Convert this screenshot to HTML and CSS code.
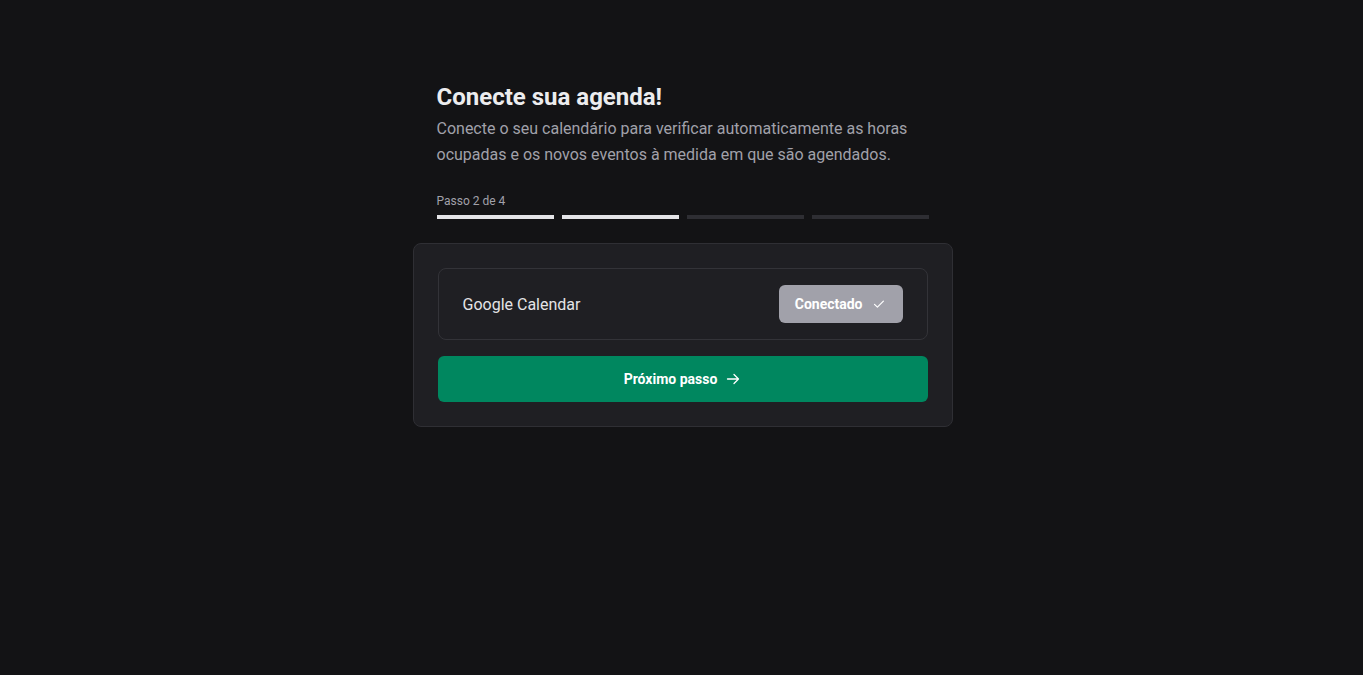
FILE: index.html
```html
<!DOCTYPE html>
<html lang="pt">
<head>
<meta charset="utf-8">
<title>Conecte sua agenda</title>
<link rel="stylesheet" href="styles.css">
</head>
<body>
<main class="page">
  <div class="wrap">
    <header class="head">
      <h1 class="title">Conecte sua agenda!</h1>
      <p class="subtitle">Conecte o seu calendário para verificar automaticamente as horas ocupadas e os novos eventos à medida em que são agendados.</p>
      <div class="step-label">Passo 2 de 4</div>
      <div class="steps">
        <span class="step done"></span>
        <span class="step done"></span>
        <span class="step"></span>
        <span class="step"></span>
      </div>
    </header>
    <section class="card">
      <div class="integration">
        <span class="int-name">Google Calendar</span>
        <button class="btn-connected" type="button">Conectado
          <svg class="ico" viewBox="0 0 16 16" width="16" height="16" fill="none" stroke="currentColor" stroke-width="1.2" stroke-linecap="round" stroke-linejoin="round"><path d="M3.5 8.3l2.9 2.9 6-6"/></svg>
        </button>
      </div>
      <button class="btn-next" type="button">Próximo passo
        <svg class="ico" viewBox="0 0 16 16" width="16" height="16" fill="none" stroke="currentColor" stroke-width="1.3" stroke-linecap="round" stroke-linejoin="round"><path d="M2.5 8h11M9 3.5L13.5 8 9 12.5"/></svg>
      </button>
    </section>
  </div>
</main>
</body>
</html>
```
FILE: styles.css
```css
* { box-sizing: border-box; }
html, body { margin: 0; padding: 0; }
body {
  background: #131315;
  font-family: Roboto, "Liberation Sans", Arial, sans-serif;
  color: #e4e4e7;
  min-height: 675px;
}
.page {
  display: flex;
  justify-content: center;
  padding-top: 81px;
}
.wrap {
  width: 540px;
  display: flex;
  flex-direction: column;
  margin-left: 2px;
}
.head {
  padding: 0 24px;
}
.title {
  margin: 0;
  font-size: 24px;
  line-height: 32px;
  font-weight: 700;
  color: #ececee;
}
.subtitle {
  margin: 3px 0 0;
  font-size: 16px;
  line-height: 26px;
  color: #a1a1aa;
}
.step-label {
  margin-top: 25px;
  font-size: 12px;
  line-height: 16px;
  color: #a1a1aa;
}
.steps {
  display: flex;
  gap: 8px;
  margin-top: 6px;
}
.step {
  flex: 1;
  height: 4px;
  background: #2e2e33;
}
.step.done { background: #e4e4e7; }

.card {
  margin-top: 24px;
  background: #1f1f23;
  border: 1px solid #2f2f34;
  border-radius: 8px;
  padding: 24px;
  display: flex;
  flex-direction: column;
  gap: 16px;
}
.integration {
  display: flex;
  align-items: center;
  justify-content: space-between;
  border: 1px solid #333338;
  border-radius: 8px;
  padding: 16px 24px;
}
.int-name {
  font-size: 16px;
  color: #e4e4e7;
}
.btn-connected {
  display: inline-flex;
  align-items: center;
  gap: 8px;
  height: 38px;
  padding: 0 16px;
  border: 0;
  border-radius: 6px;
  background: #a1a1aa;
  color: #ffffff;
  font-family: inherit;
  font-size: 14px;
  font-weight: 700;
}
.btn-next {
  display: flex;
  align-items: center;
  justify-content: center;
  gap: 8px;
  height: 46px;
  border: 0;
  border-radius: 6px;
  background: #00875f;
  color: #ffffff;
  font-family: inherit;
  font-size: 14px;
  font-weight: 700;
}
.ico { display: block; }
```
